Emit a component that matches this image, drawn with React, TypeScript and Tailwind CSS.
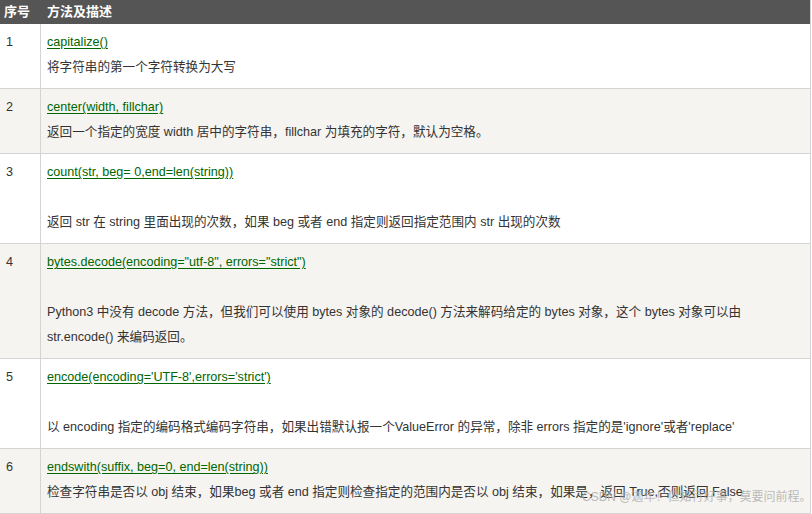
import React from "react";

type Row = {
  no: string;
  method: string;
  desc: string;
  gap?: boolean;
};

const rows: Row[] = [
  { no: "1", method: "capitalize()", desc: "将字符串的第一个字符转换为大写" },
  {
    no: "2",
    method: "center(width, fillchar)",
    desc: "返回一个指定的宽度 width 居中的字符串，fillchar 为填充的字符，默认为空格。",
  },
  {
    no: "3",
    method: "count(str, beg= 0,end=len(string))",
    desc: "返回 str 在 string 里面出现的次数，如果 beg 或者 end 指定则返回指定范围内 str 出现的次数",
    gap: true,
  },
  {
    no: "4",
    method: 'bytes.decode(encoding="utf-8", errors="strict")',
    desc: "Python3 中没有 decode 方法，但我们可以使用 bytes 对象的 decode() 方法来解码给定的 bytes 对象，这个 bytes 对象可以由 str.encode() 来编码返回。",
    gap: true,
  },
  {
    no: "5",
    method: "encode(encoding='UTF-8',errors='strict')",
    desc: "以 encoding 指定的编码格式编码字符串，如果出错默认报一个ValueError 的异常，除非 errors 指定的是'ignore'或者'replace'",
    gap: true,
  },
  {
    no: "6",
    method: "endswith(suffix, beg=0, end=len(string))",
    desc: "检查字符串是否以 obj 结束，如果beg 或者 end 指定则检查指定的范围内是否以 obj 结束，如果是，返回 True,否则返回 False",
  },
];

const font = "font-['Liberation_Sans','Noto_Sans_CJK_SC',sans-serif]";

export default function App() {
  return (
    <div className={`relative w-[812px] h-[514px] overflow-hidden bg-white text-[12.6px] text-[#333] ${font}`}>
      <div className="w-[811px] border-r border-[#d4d4d4]">
        <div className="flex h-[24px] items-center bg-[#555] text-[13px] text-white font-bold">
          <div className="w-[41px] pl-[4px]">序号</div>
          <div className="pl-[6px]">方法及描述</div>
        </div>
        {rows.map((r, i) => (
          <div
            key={r.no}
            className={`flex border-b border-[#d4d4d4] leading-[25px] ${
              i % 2 === 1 ? "bg-[#f6f4f0]" : "bg-white"
            }`}
          >
            <div className="w-[41px] shrink-0 border-r border-[#d4d4d4] pl-[6px] pt-[6px]">{r.no}</div>
            <div className="flex-1 pl-[6px] pr-[6px] pt-[6px] pb-[8px]">
              <a className="text-[#006600] underline underline-offset-[2px]">{r.method}</a>
              {r.gap && <div className="h-[25px]" />}
              <div>{r.desc}</div>
            </div>
          </div>
        ))}
      </div>
      <div className="absolute left-[582px] top-[488px] whitespace-nowrap text-[12px] text-[#aaa]/80">
        CSDN @迦年！但知行好事，莫要问前程。
      </div>
    </div>
  );
}
